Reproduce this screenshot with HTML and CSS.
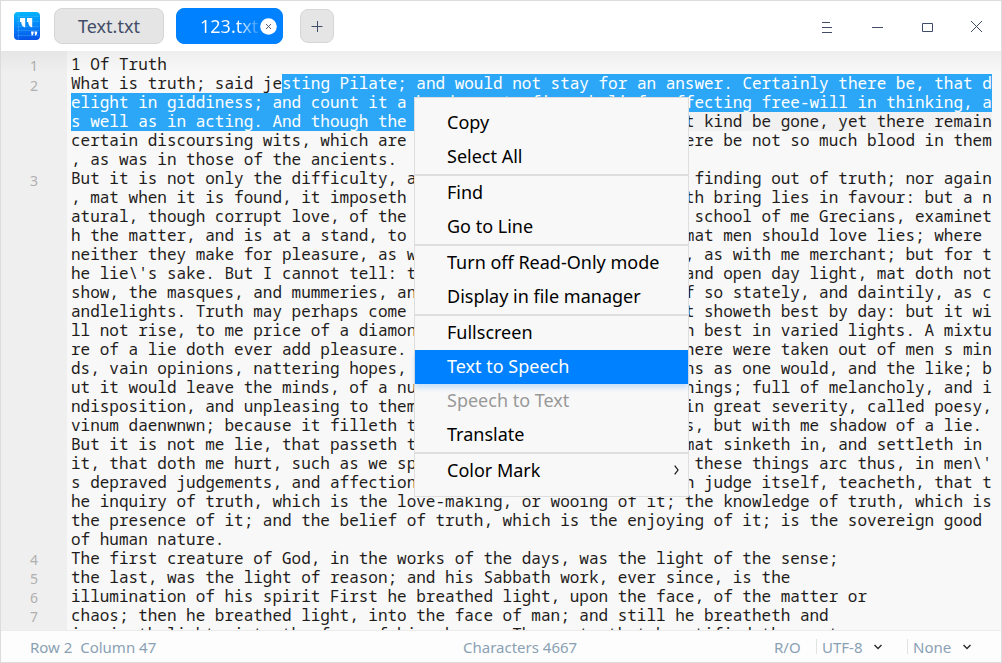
FILE: index.html
```html
<!DOCTYPE html>
<html lang="en">
<head>
<meta charset="utf-8">
<title>Text Editor</title>
<link rel="stylesheet" href="styles.css">
</head>
<body>
<div class="window">
  <header class="titlebar">
    <svg class="logo" viewBox="0 0 26 28" width="26" height="28">
      <defs><linearGradient id="lg" x1="0.6" y1="0" x2="0.7" y2="1"><stop offset="0" stop-color="#02b6fb"/><stop offset="0.5" stop-color="#0583f8"/><stop offset="1" stop-color="#0450e6"/></linearGradient></defs>
      <rect width="26" height="28" rx="4" fill="url(#lg)"/>
      <path d="M4.500 0v28M3 4.500h22M3 9.500h22M3 14.500h22M3 18.500h22M3 23.500h22" stroke="#5cc0ff" stroke-opacity=".45" stroke-width=".7"/>
      <path d="M6 6h5.200v9.500q-3.800-1-4-5.500H6zM13 6h5.200v9.500q-3.800-1-4-5.500H13z" fill="#fff"/>
      <path d="M17 19.500h2.700q.2 3.500-2 4.300zM20.500 19.500h2.700q.2 3.500-2 4.300z" fill="#fff"/>
    </svg>
    <div class="tab">Text.txt</div>
    <div class="tab tab-active"><span class="tab-name">123.txt</span>
      <svg class="tab-close" viewBox="0 0 17 17" width="17" height="17"><circle cx="8.500" cy="8.500" r="8.300" fill="#fff"/><path d="M6 6l5 5M11 6l-5 5" stroke="#414d68" stroke-width=".9"/></svg>
    </div>
    <div class="add"><svg viewBox="0 0 12 12" width="12" height="12"><path d="M.5 6.500h11M6.500 1v11" stroke="#414d68" stroke-width="1"/></svg></div>
    <div class="controls">
      <svg viewBox="0 0 50 50"><path d="M20 21.500h8M20 26.500h10M20 31.500h10" /></svg>
      <svg viewBox="0 0 50 50"><path d="M20 26.500h11"/></svg>
      <svg viewBox="0 0 50 50"><path d="M20.500 22.500h10v8h-10z"/></svg>
      <svg viewBox="0 0 50 50"><path d="M19 20l11 11M30 20l-11 11"/></svg>
    </div>
  </header>
  <main class="editor">
    <div class="gutter"><span>1</span><span class="rows-5">2</span><span class="rows-20">3</span><span>4</span><span>5</span><span>6</span><span>7</span></div>
<pre class="code">1 Of Truth
What is truth; said je<span class="sel">sting Pilate; and would not stay for an answer. Certainly there be, that d</span>
<span class="sel">elight in giddiness; and count it a bondage, to fix a belief; affecting free-will in thinking, a</span>
<span class="current"><span class="sel">s well as in acting. And though the sects</span> of philosophers of that kind be gone, yet there remain</span>
certain discoursing wits, which are of the same veins, though there be not so much blood in them
, as was in those of the ancients.
But it is not only the difficulty, and labour, which men take in finding out of truth; nor again
, mat when it is found, it imposeth upon men's thoughts, that doth bring lies in favour: but a n
atural, though corrupt love, of the lie itself. One of the later school of me Grecians, examinet
h the matter, and is at a stand, to think what should be in it, mat men should love lies; where 
neither they make for pleasure, as with poets, nor for advantage, as with me merchant; but for t
he lie\'s sake. But I cannot tell: this same truth, is a naked, and open day light, mat doth not
show, the masques, and mummeries, and triumphs of the world, half so stately, and daintily, as c
andlelights. Truth may perhaps come to the price of a pearl, that showeth best by day: but it wi
ll not rise, to me price of a diamond, or carbuncle, that showeth best in varied lights. A mixtu
re of a lie doth ever add pleasure. Doth any man doubt that if there were taken out of men s min
ds, vain opinions, nattering hopes, false valuations, imaginations as one would, and the like; b
ut it would leave the minds, of a number of men, poor shrunken things; full of melancholy, and i
ndisposition, and unpleasing to themselves? One of the fathers, in great severity, called poesy,
vinum daenwnwn; because it filleth the imagination; and yet it is, but with me shadow of a lie.
But it is not me lie, that passeth through the mind but the lie mat sinketh in, and settleth in 
it, that doth me hurt, such as we spake of before. But howsoever these things arc thus, in men\'
s depraved judgements, and affections, yet truth, which only doth judge itself, teacheth, that t
he inquiry of truth, which is the love-making, or wooing of it; the knowledge of truth, which is
the presence of it; and the belief of truth, which is the enjoying of it; is the sovereign good 
of human nature.
The first creature of God, in the works of the days, was the light of the sense;
the last, was the light of reason; and his Sabbath work, ever since, is the
illumination of his spirit First he breathed light, upon the face, of the matter or
chaos; then he breathed light, into the face of man; and still he breatheth and
inspireth light, into the face of his chosen. The poet, that beautified the sect</pre>
    <nav class="menu">
      <div class="item">Copy</div>
      <div class="item">Select All</div>
      <hr>
      <div class="item">Find</div>
      <div class="item">Go to Line</div>
      <hr>
      <div class="item">Turn off Read-Only mode</div>
      <div class="item">Display in file manager</div>
      <hr>
      <div class="item">Fullscreen</div>
      <div class="item item-active">Text to Speech</div>
      <div class="item item-disabled">Speech to Text</div>
      <div class="item">Translate</div>
      <hr>
      <div class="item">Color Mark<svg viewBox="0 0 5 10" width="5" height="10"><path d="M.7.700l3.300 4.300-3.300 4.300" fill="none" stroke="#111" stroke-width="1.200"/></svg></div>
    </nav>
  </main>
  <footer class="status">
    <span class="position">Row 2&nbsp; Column 47</span>
    <span class="count">Characters 4667</span>
    <span class="mode">R/O</span>
    <span class="choice encoding">UTF-8<svg viewBox="0 0 10 6" width="10" height="6"><path d="M1.500 1l3.500 3.500 3.500-3.500"/></svg></span>
    <span class="choice language">None<svg viewBox="0 0 10 6" width="10" height="6"><path d="M1.500 1l3.500 3.500 3.500-3.500"/></svg></span>
  </footer>
</div>
</body>
</html>
```
FILE: styles.css
```css
* { box-sizing: border-box; }
body { margin: 0; font-family: "Noto Sans", sans-serif; }
.window {
  width: 1002px; height: 663px; overflow: hidden;
  display: flex; flex-direction: column;
  border: 1px solid #dcdcdc; background: #fff;
}
.titlebar { height: 50px; flex: none; display: flex; align-items: center; padding-left: 13px; }
.logo { flex: none; }
.tab {
  width: 110px; height: 36px; margin-left: 14px; flex: none;
  border: 1px solid #d6d6d6; border-radius: 8px; background: #e5e5e5;
  color: #414d68; font-size: 18px; line-height: 35px; text-align: center;
}
.tab-active {
  width: 107px; margin-left: 12px; display: flex; align-items: center;
  padding-left: 23px; border-color: #0081ff; background: #0081ff;
}
.tab-name {
  width: 60px; overflow: hidden; text-align: left; color: transparent;
  background: linear-gradient(90deg, #fff 62%, rgba(255,255,255,.1) 100%);
  -webkit-background-clip: text; background-clip: text;
}
.tab-close { flex: none; }
.add {
  width: 34px; height: 34px; margin-left: 17px; flex: none;
  display: flex; align-items: center; justify-content: center;
  border: 1px solid #d6d6d6; border-radius: 8px; background: #e5e5e5;
}
.controls { display: flex; margin: 0 -1px 0 auto; }
.controls svg { width: 50px; height: 50px; fill: none; stroke: #414d68; stroke-width: 1; }
.editor { position: relative; flex: 1; min-height: 0; display: flex; overflow: hidden; background: #f8f8f8; }
.editor::before {
  content: ""; position: absolute; inset: 0 0 auto; height: 22px;
  background: linear-gradient(rgba(0,0,0,.04), rgba(0,0,0,0));
}
.gutter {
  width: 66px; flex: none; display: flex; flex-direction: column; padding: 5px 29px 0 0;
  background: #efefef; color: #b0b0b0; font-size: 14px; line-height: 19px; text-align: right;
}
.gutter span { flex: none; height: 19px; }
.gutter .rows-5 { height: 95px; padding-top: 1px; }
.gutter .rows-20 { height: 380px; padding-top: 1px; }
.code {
  margin: 0; padding: 4px 0 0 4px; color: #1f1c1b; letter-spacing: -0.009px;
  font-family: "Noto Sans Mono", "DejaVu Sans Mono", monospace; font-size: 16px; line-height: 19px;
}
.sel, .current { display: inline-block; height: 19px; vertical-align: top; }
.sel { background: #2ca7f8; color: #fff; }
.current { background: #f1f1f1; }
.menu {
  position: absolute; left: 413px; top: 46px; width: 275px; height: 400px; padding: 8px 0;
  border: 1px solid #dedede; background: #f8f8f8; color: #000; font-size: 18px;
}
.menu hr { height: 2px; margin: 0; border: 0; background: #dedede; }
.item {
  height: 34px; padding: 0 9px 2px 32px; line-height: 32px;
  display: flex; align-items: center; justify-content: space-between;
}
.item-active { background: #0081ff; color: #fff; box-shadow: 0 4px 5px rgba(0,129,255,.2); }
.item-disabled { color: #999; }
.status {
  height: 32px; flex: none; display: flex; align-items: center; padding-left: 29px;
  border-top: 1px solid #ececec; background: #fdfdfd; color: #8aa1b4; font-size: 15px;
}
.position { width: 433px; }
.count { width: 311px; }
.mode { width: 42px; }
.choice { height: 15px; display: flex; align-items: center; border-left: 1px solid #e2e2e2; padding-left: 5px; }
.choice svg { margin-left: 10px; fill: none; stroke: #303030; stroke-width: 1.5; }
.encoding { width: 91px; }
.language svg { margin-left: 11px; }
```
